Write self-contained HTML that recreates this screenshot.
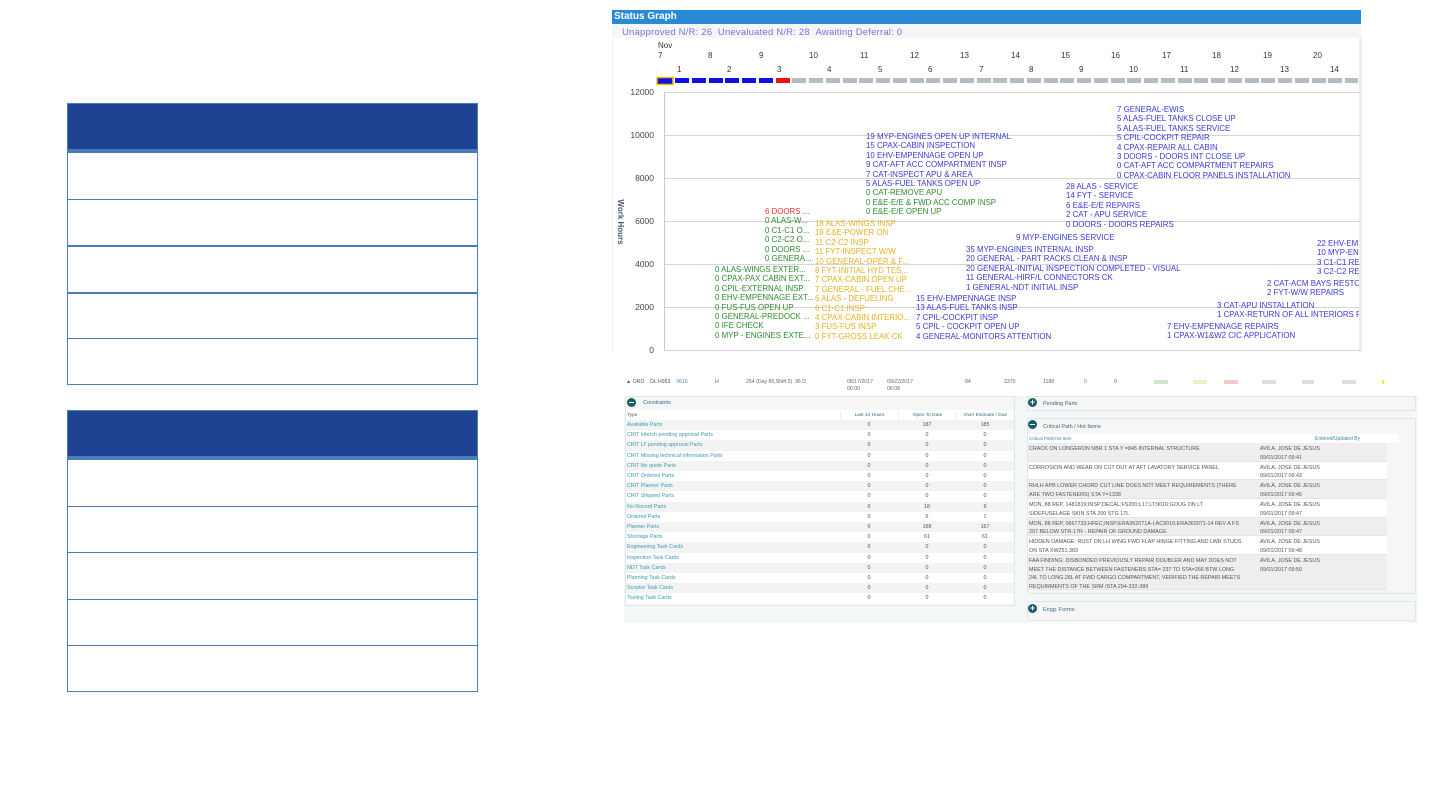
<!DOCTYPE html>
<html><head><meta charset="utf-8"><style>
*{margin:0;padding:0;box-sizing:border-box}
body{width:1440px;height:810px;background:#fff;position:relative;overflow:hidden;font-family:"Liberation Sans",sans-serif}
.a{position:absolute;white-space:nowrap}
.tb{position:absolute;left:67px;width:411px;border:1px solid #4a7ebb}
.tb .h{height:48px;background:#1f4293;border-bottom:3px solid #4a7ebb}
.tb .r{height:46.5px;border-top:1px solid #4a7ebb}
.tb .r:first-of-type{border-top:none}
.g{font-size:7.9px;line-height:9.4px;letter-spacing:0}
.bl{color:#3a3ad8}.gr{color:#2e8b2e}.or{color:#e6b222}.rd{color:#f03030}
.sm{font-size:5.2px;color:#666}
.lk{color:#3a9ab0}
</style></head><body>

<div class="tb" style="top:103px;height:282px"><div class="h"></div><div class="r"></div><div class="r"></div><div class="r" style="border-top-width:2px"></div><div class="r" style="border-top-width:2px"></div><div class="r"></div></div>
<div class="tb" style="top:410px;height:282px"><div class="h"></div><div class="r"></div><div class="r"></div><div class="r"></div><div class="r"></div><div class="r"></div></div>

<!-- status graph -->
<div class="a" style="left:612px;top:10px;width:749px;height:14px;background:#2b8ad6;color:#fff;font-weight:bold;font-size:10px;line-height:14px;padding-left:2px">Status Graph</div>
<div class="a" style="left:612px;top:24px;width:749px;height:14px;background:#f5f6f8"></div>
<div class="a" style="left:622px;top:27px;font-size:9.5px;color:#7575d8;letter-spacing:0.2px">Unapproved N/R: 26 &nbsp;Unevaluated N/R: 28 &nbsp;Awaiting Deferral: 0</div>
<div class="a" style="left:612px;top:38px;width:1px;height:314px;background:#eee"></div>
<div class="a" style="left:1359px;top:38px;width:3px;height:314px;background:#eee"></div>

<svg class="a" style="left:612px;top:38px" width="748" height="316" font-family="Liberation Sans,sans-serif">
<g font-size="8" fill="#333">
<text x="46" y="10">Nov</text>
<text x="46" y="20">7</text><text x="96" y="20">8</text><text x="147" y="20">9</text><text x="197" y="20">10</text><text x="248" y="20">11</text><text x="298" y="20">12</text><text x="348" y="20">13</text><text x="399" y="20">14</text><text x="449" y="20">15</text><text x="499" y="20">16</text><text x="550" y="20">17</text><text x="600" y="20">18</text><text x="651" y="20">19</text><text x="701" y="20">20</text>
<text x="65" y="34">1</text><text x="115" y="34">2</text><text x="165" y="34">3</text><text x="215" y="34">4</text><text x="266" y="34">5</text><text x="316" y="34">6</text><text x="367" y="34">7</text><text x="417" y="34">8</text><text x="467" y="34">9</text><text x="517" y="34">10</text><text x="568" y="34">11</text><text x="618" y="34">12</text><text x="668" y="34">13</text><text x="718" y="34">14</text>
</g>
<rect x="45" y="39.5" width="16" height="7" fill="#1010e0" stroke="#f2c000" stroke-width="1.5"/>
<g stroke="#d6d6d6" stroke-width="1">
<line x1="52" y1="54.5" x2="748" y2="54.5"/><line x1="52" y1="97.5" x2="748" y2="97.5"/><line x1="52" y1="140.5" x2="748" y2="140.5"/><line x1="52" y1="183.5" x2="748" y2="183.5"/><line x1="52" y1="226.5" x2="748" y2="226.5"/><line x1="52" y1="269.5" x2="748" y2="269.5"/><line x1="52" y1="312.5" x2="748" y2="312.5"/>
</g>
<line x1="52.5" y1="54" x2="52.5" y2="313" stroke="#c8c8c8"/>
<g font-size="8.5" fill="#444" text-anchor="end">
<text x="42" y="57">12000</text><text x="42" y="100">10000</text><text x="42" y="143">8000</text><text x="42" y="186">6000</text><text x="42" y="229">4000</text><text x="42" y="272">2000</text><text x="42" y="315">0</text>
</g>
<text transform="translate(6,184) rotate(90)" font-size="8" font-weight="bold" fill="#4a5a70" text-anchor="middle">Work Hours</text>
</svg>
<div class="a" id="dashes" style="left:675px;top:78px;height:6px;width:683px;overflow:hidden"></div>

<div class="a g gr" style="left:715px;top:265px">0 ALAS-WINGS EXTER...<br>0 CPAX-PAX CABIN EXT...<br>0 CPIL-EXTERNAL INSP<br>0 EHV-EMPENNAGE EXT...<br>0 FUS-FUS OPEN UP<br>0 GENERAL-PREDOCK ...<br>0 IFE CHECK<br>0 MYP - ENGINES EXTE...</div>
<div class="a g" style="left:765px;top:207px"><span class="rd">6 DOORS ...</span><br><span class="gr">0 ALAS-W...<br>0 C1-C1 O...<br>0 C2-C2 O...<br>0 DOORS ...<br>0 GENERA...</span></div>
<div class="a g or" style="left:815px;top:219px">18 ALAS-WINGS INSP<br>18 E&amp;E-POWER ON<br>11 C2-C2 INSP<br>11 FYT-INSPECT W/W<br>10 GENERAL-OPER &amp; F...<br>8 FYT-INITIAL HYD TES...<br>7 CPAX-CABIN OPEN UP<br>7 GENERAL - FUEL CHE...<br>6 ALAS - DEFUELING<br>6 C1-C1 INSP<br>4 CPAX-CABIN INTERIO...<br>3 FUS-FUS INSP<br>0 FYT-GROSS LEAK CK</div>
<div class="a g" style="left:866px;top:132px"><span class="bl">19 MYP-ENGINES OPEN UP INTERNAL<br>15 CPAX-CABIN INSPECTION<br>10 EHV-EMPENNAGE OPEN UP<br>9 CAT-AFT ACC COMPARTMENT INSP<br>7 CAT-INSPECT APU &amp; AREA<br>5 ALAS-FUEL TANKS OPEN UP</span><br><span class="gr">0 CAT-REMOVE APU<br>0 E&amp;E-E/E &amp; FWD ACC COMP INSP<br>0 E&amp;E-E/E OPEN UP</span></div>
<div class="a g bl" style="left:916px;top:294px">15 EHV-EMPENNAGE INSP<br>13 ALAS-FUEL TANKS INSP<br>7 CPIL-COCKPIT INSP<br>5 CPIL - COCKPIT OPEN UP<br>4 GENERAL-MONITORS ATTENTION</div>
<div class="a g bl" style="left:1016px;top:233px">9 MYP-ENGINES SERVICE</div>
<div class="a g bl" style="left:966px;top:245px">35 MYP-ENGINES INTERNAL INSP<br>20 GENERAL - PART RACKS CLEAN &amp; INSP<br>20 GENERAL-INITIAL INSPECTION COMPLETED - VISUAL<br>11 GENERAL-HIRF/L CONNECTORS CK<br>1 GENERAL-NDT INITIAL INSP</div>
<div class="a g bl" style="left:1066px;top:182px">28 ALAS - SERVICE<br>14 FYT - SERVICE<br>6 E&amp;E-E/E REPAIRS<br>2 CAT - APU SERVICE<br>0 DOORS - DOORS REPAIRS</div>
<div class="a g bl" style="left:1117px;top:105px">7 GENERAL-EWIS<br>5 ALAS-FUEL TANKS CLOSE UP<br>5 ALAS-FUEL TANKS SERVICE<br>5 CPIL-COCKPIT REPAIR<br>4 CPAX-REPAIR ALL CABIN<br>3 DOORS - DOORS INT CLOSE UP<br>0 CAT-AFT ACC COMPARTMENT REPAIRS<br>0 CPAX-CABIN FLOOR PANELS INSTALLATION</div>
<div class="a g bl" style="left:1167px;top:322px">7 EHV-EMPENNAGE REPAIRS<br>1 CPAX-W1&amp;W2 CIC APPLICATION</div>
<div class="a" style="left:1217px;top:301px;width:142px;overflow:hidden"><div class="g bl">3 CAT-APU INSTALLATION<br>1 CPAX-RETURN OF ALL INTERIORS F</div></div>
<div class="a" style="left:1267px;top:279px;width:92px;overflow:hidden"><div class="g bl">2 CAT-ACM BAYS RESTO<br>2 FYT-W/W REPAIRS</div></div>
<div class="a" style="left:1317px;top:239px;width:42px;overflow:hidden"><div class="g bl">22 EHV-EM<br>10 MYP-EN<br>3 C1-C1 RE<br>3 C2-C2 RE</div></div>

<!-- bottom panel -->
<div class="a" style="left:624px;top:375px;width:794px;height:248px;background:#f3f7f7"></div>
<div class="a" style="left:624px;top:375px;width:794px;height:21px;background:#fff"></div>
<div class="a sm" style="left:626px;top:379px;color:#555">▲ ORO &nbsp;&nbsp;&nbsp;DL H953 &nbsp;&nbsp;&nbsp;<span class="lk">9616</span></div>
<div class="a sm" style="left:715px;top:379px">H</div>
<div class="a sm" style="left:746px;top:379px">254 (Day 85,Shift 2) &nbsp;36 D</div>
<div class="a sm" style="left:847px;top:379px;line-height:7px">08/17/2017<br>00:00</div>
<div class="a sm" style="left:887px;top:379px;line-height:7px">09/22/2017<br>06:08</div>
<div class="a sm" style="left:965px;top:379px">84</div>
<div class="a sm" style="left:1004px;top:379px">2370</div>
<div class="a sm" style="left:1043px;top:379px">1188</div>
<div class="a sm lk" style="left:1084px;top:379px">0</div>
<div class="a sm" style="left:1114px;top:379px">0</div>
<div class="a" style="left:1154px;top:380px;width:14px;height:4px;background:#cfe8c8"></div>
<div class="a" style="left:1193px;top:380px;width:14px;height:4px;background:#f5ecc0"></div>
<div class="a" style="left:1224px;top:380px;width:14px;height:4px;background:#f6c8c8"></div>
<div class="a" style="left:1262px;top:380px;width:14px;height:4px;background:#ddd"></div>
<div class="a" style="left:1302px;top:380px;width:12px;height:4px;background:#ddd"></div>
<div class="a" style="left:1342px;top:380px;width:14px;height:4px;background:#ddd"></div>
<div class="a" style="left:1382px;top:380px;width:2px;height:4px;background:#ee3"></div>

<!-- constraints -->
<div class="a" style="left:625px;top:396px;width:390px;height:210px;border:1px solid #e3e6e6;background:#f6f6f6"></div>
<div class="a" style="left:627px;top:398px;width:9px;height:9px;border-radius:50%;background:#1a5a6a"></div>
<div class="a" style="left:629px;top:402px;width:5px;height:1px;background:#fff"></div>
<div class="a sm" style="left:643px;top:400px;color:#3a6a80;font-size:5.5px">Constraints</div>
<div class="a" style="left:626px;top:410px;width:388px;height:185px;background:#fff" id="ct"></div>

<!-- right panels -->
<div class="a" style="left:1027px;top:396px;width:389px;height:15px;border:1px solid #e3e6e6;background:#f6f6f6"></div>
<div class="a" style="left:1028px;top:398px;width:9px;height:9px;border-radius:50%;background:#1a5a6a;color:#fff;font-size:9px;line-height:9px;text-align:center;font-weight:bold">+</div>
<div class="a sm" style="left:1043px;top:401px;color:#3a6a80;font-size:5.5px">Pending Parts</div>

<div class="a" style="left:1027px;top:418px;width:389px;height:176px;border:1px solid #e3e6e6;background:#f6f6f6"></div>
<div class="a" style="left:1028px;top:420px;width:9px;height:9px;border-radius:50%;background:#1a5a6a"></div>
<div class="a" style="left:1030px;top:424px;width:5px;height:1px;background:#fff"></div>
<div class="a sm" style="left:1043px;top:424px;color:#3a6a80;font-size:5.5px">Critical Path / Hot Items</div>
<div class="a" style="left:1028px;top:434px;width:371px;height:9px;background:#fff"></div>
<div class="a" style="left:1029px;top:436px;font-size:4.5px;color:#3a8aa0">Critical Path/Hot Item</div>
<div class="a" style="left:1315px;top:436px;font-size:5px;color:#3a8aa0">Entered/Updated By</div>
<div id="cp"></div>

<div class="a" style="left:1027px;top:601px;width:389px;height:20px;border:1px solid #e3e6e6;background:#f6f6f6"></div>
<div class="a" style="left:1028px;top:604px;width:9px;height:9px;border-radius:50%;background:#1a5a6a;color:#fff;font-size:9px;line-height:9px;text-align:center;font-weight:bold">+</div>
<div class="a sm" style="left:1043px;top:607px;color:#3a6a80;font-size:5.5px">Engg. Forms</div>

<script>
var d=document.getElementById('dashes'),h='';
for(var i=0;i<41;i++){var c=i<6?'#1010e0':(i==6?'#f01010':'#b4bcc6');h+='<div style="position:absolute;left:'+(i*16.75)+'px;top:0;width:14px;height:5px;background:'+c+'"></div>';}
d.innerHTML=h;
var rows=[["Available Parts",0,187,185],["CRIT Interch pending approval Parts",0,0,0],["CRIT LT pending approval Parts",0,0,0],["CRIT Missing technical information Parts",0,0,0],["CRIT No quote Parts",0,0,0],["CRIT Ordered Parts",0,0,0],["CRIT Planner Parts",0,0,0],["CRIT Shipped Parts",0,0,0],["No Record Parts",0,18,9],["Ordered Parts",0,6,1],["Planner Parts",0,168,167],["Shortage Parts",0,61,61],["Engineering Task Cards",0,0,0],["Inspection Task Cards",0,0,0],["NDT Task Cards",0,0,0],["Planning Task Cards",0,0,0],["Sceptre Task Cards",0,0,0],["Tooling Task Cards",0,0,0]];
var s='<div class="a" style="left:1px;top:3px;font-size:4.8px;color:#555">Type</div><div class="a" style="left:214px;width:58px;top:1px;height:10px;border-left:1px solid #eee;text-align:center;font-size:4.8px;color:#3a6a80;line-height:9px">Last 24 Hours</div><div class="a" style="left:272px;width:58px;top:1px;height:10px;border-left:1px solid #eee;text-align:center;font-size:4.8px;color:#3a6a80;line-height:9px">Open To Date</div><div class="a" style="left:330px;width:58px;top:1px;height:10px;border-left:1px solid #eee;text-align:center;font-size:4.8px;color:#3a6a80;line-height:9px">Over Estimate / Due</div>';
for(var i=0;i<rows.length;i++){var y=10+i*10.2,r=rows[i];s+='<div class="a" style="left:0;top:'+y+'px;width:388px;height:10.2px;background:'+(i%2?'#fff':'#f3f3f3')+'"></div><div class="a lk" style="left:1px;top:'+(y+2)+'px;font-size:5.3px">'+r[0]+'</div>';
[r[1],r[2],r[3]].forEach(function(v,k){s+='<div class="a" style="left:'+(214+k*58)+'px;width:58px;text-align:center;top:'+(y+2)+'px;font-size:5.3px;color:#555">'+v+'</div>';});}
document.getElementById('ct').innerHTML=s;
var cp=[["CRACK ON LONGERON NBR 1 STA Y =845 INTERNAL STRUCTURE","09/01/2017 09:41",443,18.5],["CORROSION AND WEAR ON CUT OUT AT AFT LAVATORY SERVICE PANEL","09/01/2017 09:43",461.5,18.5],["RHLH APB LOWER CHORD CUT LINE DOES NOT MEET REQUIREMENTS (THERE<br>ARE TWO FASTENERS) STA Y=1338","09/01/2017 09:45",480,19],["MON, 88 REP, 1481819;INSP;DECAL;FS200;L17;LT;9016;GOUG ON LT<br>SIDEFUSELAGE SKIN STA 200 STG 17L","09/01/2017 09:47",499,18.5],["MON, 88 REP, 0667733;HFEC;INSP;ERA362071A-I;AC9016;ERA362071-14 REV A FS<br>207 BELOW STR-17R - REPAIR OF GROUND DAMAGE","09/01/2017 09:47",517.5,18.5],["HIDDEN DAMAGE: RUST ON LH WING FWD FLAP HINGE FITTING AND LWR STUDS<br>ON STA XW251.383","09/01/2017 09:48",536,19],["FAA FINDING: DISBONDED PREVIOUSLY REPAIR DOUBLER AND MAY DOES NOT<br>MEET THE DISTANCE BETWEEN FASTENERS STA= 237 TO STA=266 BTW LONG<br>24L TO LONG.26L AT FWD CARGO COMPARTMENT, VERIFIED THE REPAIR MEETS<br>REQUIRMENTS OF THE SRM /STA 294-332-389","09/01/2017 09:50",555,35]];
var t='';cp.forEach(function(r,i){t+='<div class="a" style="left:1028px;top:'+r[2]+'px;width:359px;height:'+r[3]+'px;background:'+(i%2?'#fff':'#eeeeee')+';border-bottom:1px solid #e4e4e4"></div><div class="a" style="left:1029px;top:'+(r[2]+2)+'px;font-size:5.4px;line-height:8.6px;color:#555">'+r[0]+'</div><div class="a" style="left:1260px;top:'+(r[2]+2)+'px;font-size:5.4px;line-height:8.6px;color:#555">AVILA, JOSE DE JESUS<br>'+r[1]+'</div>';});
document.getElementById('cp').innerHTML=t;
</script>
</body></html>
